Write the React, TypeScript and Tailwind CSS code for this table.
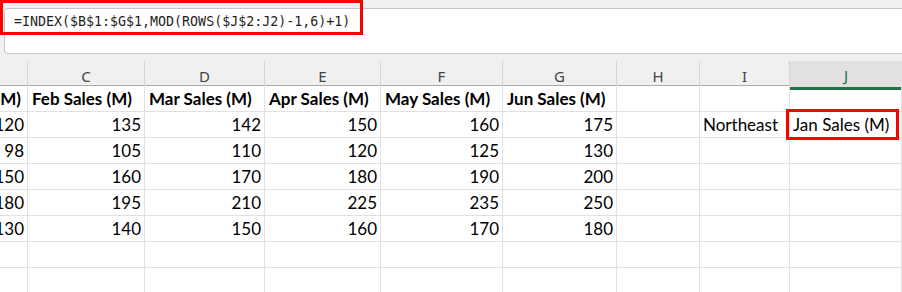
const cols = ['B', 'C', 'D', 'E', 'F', 'G', 'H', 'I', 'J'];

const headers = ['Jan Sales (M)', 'Feb Sales (M)', 'Mar Sales (M)', 'Apr Sales (M)', 'May Sales (M)', 'Jun Sales (M)'];

const data = [
  [120, 135, 142, 150, 160, 175],
  [98, 105, 110, 120, 125, 130],
  [150, 160, 170, 180, 190, 200],
  [180, 195, 210, 225, 235, 250],
  [130, 140, 150, 160, 170, 180],
];

const grid = 'grid grid-cols-[28px_117px_120px_116px_122px_114px_83px_90px_1fr]';
const cell = 'h-[26px] border-r border-b border-[#e1e1e1] flex items-center overflow-hidden whitespace-nowrap';

export default function App() {
  return (
    <div className="w-[902px] h-[292px] overflow-hidden bg-white font-['Lato',sans-serif] text-[17px] text-black">
      {/* formula bar */}
      <div className="relative bg-[#f0f0f0] pt-[8px] pl-[4px] pb-[7px]">
        <div className="h-[46px] bg-white border border-r-0 border-[#c6c6c6] rounded-l-[4px] pl-[9px] pt-[5px] font-['DejaVu_Sans_Mono',monospace] text-[13.3px] leading-[16px] text-[#1f1f1f]">
          =INDEX($B$1:$G$1,MOD(ROWS($J$2:J2)-1,6)+1)
        </div>
        <div className="absolute left-0 top-0 w-[363px] h-[35px] border-[3px] border-[#ff0000]" />
      </div>

      {/* column headers */}
      <div className={`${grid} h-[25px] bg-[#f0f0f0] border-b border-[#ababab] font-['Noto_Sans',sans-serif] text-[15px]`}>
        {cols.map((c) =>
          c === 'J' ? (
            <div key={c} className="flex items-center justify-center bg-[#e1e1e1] border-b-[3px] border-[#217346] text-[#217346] pt-[3px]">
              {c}
            </div>
          ) : (
            <div key={c} className="flex items-center justify-center border-r border-[#d4d4d4] text-[#444] pt-[2px]">
              {c === 'B' ? '' : c}
            </div>
          )
        )}
      </div>

      {/* header row */}
      <div className={grid}>
        {headers.map((h, i) => (
          <div key={h} className={`${cell} font-bold ${i === 0 ? 'justify-end pr-[6px]' : 'pl-[4px]'}`}>
            {h}
          </div>
        ))}
        <div className={cell} />
        <div className={cell} />
        <div className={cell} />
      </div>

      {/* data rows */}
      {data.map((row, r) => (
        <div key={r} className={grid}>
          {row.map((v, i) => (
            <div key={i} className={`${cell} justify-end pr-[3px]`}>
              {v}
            </div>
          ))}
          <div className={cell} />
          <div className={`${cell} pl-[3px]`}>{r === 0 ? 'Northeast' : ''}</div>
          <div className={`${cell} relative pl-[3px] overflow-visible`}>
            {r === 0 && (
              <>
                Jan Sales (M)
                <div className="absolute left-[-4px] top-[-3px] w-[113px] h-[31px] border-[3px] border-[#ff0000]" />
              </>
            )}
          </div>
        </div>
      ))}

      {/* empty rows */}
      {[0, 1].map((r) => (
        <div key={`e${r}`} className={grid}>
          {cols.map((c) => (
            <div key={c} className={cell} />
          ))}
        </div>
      ))}
    </div>
  );
}
